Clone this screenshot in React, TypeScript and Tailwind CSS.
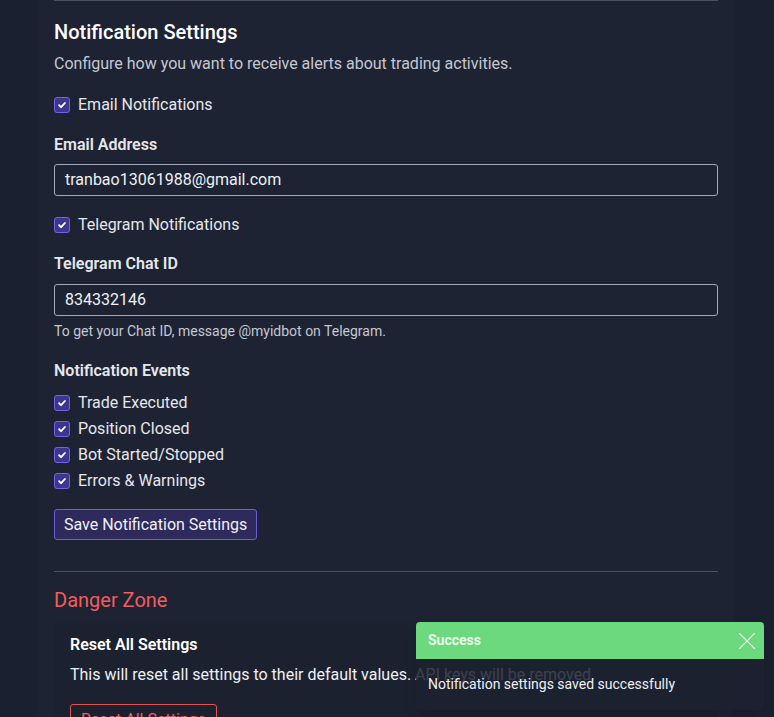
import { X } from "lucide-react";

const Check = ({ label }: { label: string }) => (
  <label className="flex items-center gap-2 text-[16px] text-[#e5e7eb]">
    <span className="flex h-4 w-4 items-center justify-center rounded-[3px] border border-[#7263e0] bg-[#3d3690]">
      <svg viewBox="0 0 12 12" className="h-[10px] w-[10px]" fill="none" stroke="white" strokeWidth="2.2" strokeLinecap="round" strokeLinejoin="round">
        <path d="M2.5 6.3l2.4 2.3 4.6-5" />
      </svg>
    </span>
    {label}
  </label>
);

const App = () => {
  const events = ["Trade Executed", "Position Closed", "Bot Started/Stopped", "Errors & Warnings"];

  return (
    <div className="relative h-[717px] overflow-hidden bg-[#1b2030] font-['Roboto',sans-serif] text-[#e5e7eb]">
      <div className="ml-[38px] mr-[40px] h-full bg-[#1e2334] px-[16px]">
        <div className="border-t border-[#4b5060] pt-[16px]">
          <h2 className="text-[20px] font-medium leading-[30px] text-white">Notification Settings</h2>
          <p className="mt-[5px] text-[16px] leading-[24px] text-[#c4c8d0]">
            Configure how you want to receive alerts about trading activities.
          </p>

          <div className="mt-[17px]">
            <Check label="Email Notifications" />
          </div>

          <div className="mt-[17px] text-[16px] font-semibold leading-[22px]">Email Address</div>
          <div className="mt-[8px] flex h-[32px] items-center rounded-[3px] border border-[#a3aabb] px-[10px] text-[16px] text-[#eef0f3]">
            tranbao13061988@gmail.com
          </div>

          <div className="mt-[17px]">
            <Check label="Telegram Notifications" />
          </div>

          <div className="mt-[16px] text-[16px] font-semibold leading-[22px]">Telegram Chat ID</div>
          <div className="mt-[9px] flex h-[32px] items-center rounded-[3px] border border-[#a3aabb] px-[10px] text-[16px] text-[#eef0f3]">
            834332146
          </div>
          <p className="mt-[5px] text-[14px] leading-[20px] text-[#c4c8d0]">
            To get your Chat ID, message @myidbot on Telegram.
          </p>

          <div className="mt-[19px] text-[16px] font-semibold leading-[22px]">Notification Events</div>
          <div className="mt-[10px] flex flex-col gap-[4px] leading-[22px]">
            {events.map((e) => (
              <Check key={e} label={e} />
            ))}
          </div>

          <button className="mt-[17px] h-[31px] rounded-[3px] border border-[#6d5ce0] bg-[#2e2a5c] px-[9px] text-[16px] text-[#eef0f3]">
            Save Notification Settings
          </button>

          <div className="mt-[31px] border-t border-[#4b5060] pt-[14px]">
            <h2 className="text-[20px] leading-[28px] text-[#f25c5c]">Danger Zone</h2>
            <div className="mt-[9px] bg-[#1c2130] px-[16px] pt-[10px]">
              <div className="text-[16px] font-semibold leading-[24px] text-white">Reset All Settings</div>
              <p className="mt-[6px] text-[16px] leading-[24px] text-[#eef0f3]">
                This will reset all settings to their default values. API keys will be removed.
              </p>
              <button className="mt-[17px] h-[32px] rounded-[3px] border border-[#e55353] px-[10px] text-[16px] text-[#f25c5c]">
                Reset All Settings
              </button>
            </div>
          </div>
        </div>
      </div>

      <div className="absolute left-[416px] top-[622px] w-[348px] rounded-[4px] bg-[#1c2130]/85 shadow-lg">
        <div className="flex h-[37px] items-center justify-between rounded-t-[4px] bg-[#6cd97e] pl-[12px] pr-[2px]">
          <span className="text-[14px] font-bold text-[#e9fbe9]">Success</span>
          <X className="h-[30px] w-[30px] text-[#e0f7e2]" strokeWidth={0.9} />
        </div>
        <div className="px-[12px] py-[15px] text-[14px] text-[#eef0f3]">Notification settings saved successfully</div>
      </div>
    </div>
  );
};

export default App;
